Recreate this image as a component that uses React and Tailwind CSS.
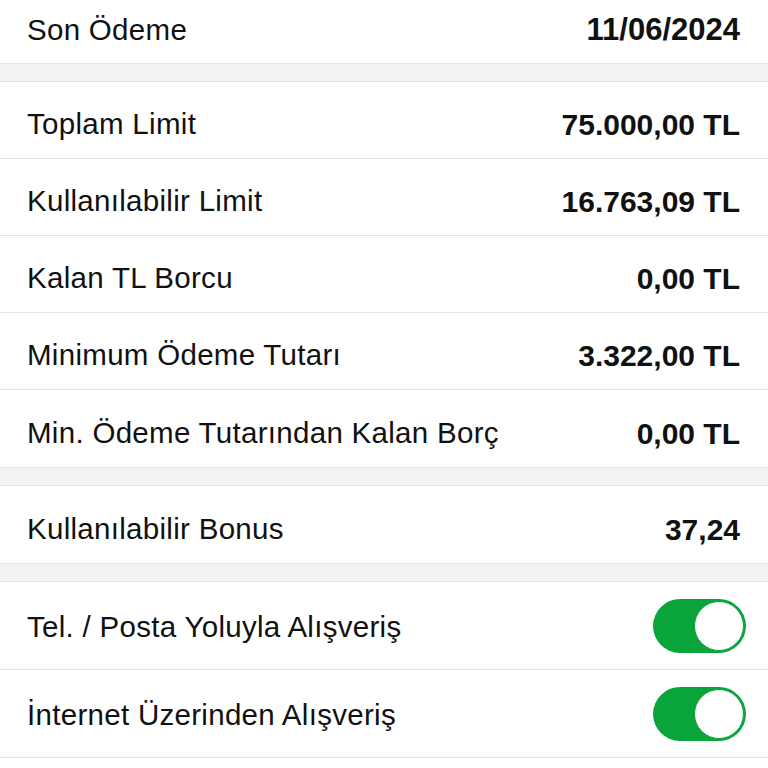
import React from "react";

const Row = ({ label, value, last }) => (
  <div className={`flex h-[77px] items-center justify-between pl-[27px] pr-[28px] pt-[9px] ${last ? "" : "border-b border-[#e3e3e3]"}`}>
    <span className="tracking-[0.01em]">{label}</span>
    <span className="text-[30px] font-bold">{value}</span>
  </div>
);

const Gap = () => <div className="h-[19px] border-y border-[#e3e3e3] bg-[#f3f3f3]" />;

const Toggle = () => (
  <div className="flex h-[54px] w-[93px] items-center justify-end rounded-full bg-[#0aa53a] p-[2px]">
    <div className="h-[50px] w-[50px] rounded-full border border-[#0aa53a] bg-white" />
  </div>
);

const ToggleRow = ({ label }) => (
  <div className="flex h-[88px] items-center justify-between border-b border-[#e3e3e3] pl-[27px] pr-[22px]">
    <span className="pt-[4px] tracking-[0.01em]">{label}</span>
    <Toggle />
  </div>
);

export default function App() {
  return (
    <div className="h-[768px] w-[768px] overflow-hidden bg-white text-[29.5px] text-[#111] [font-family:'Liberation_Sans',Arial,sans-serif]">
      <div className="flex h-[63px] items-center justify-between pb-[2px] pl-[27px] pr-[28px]">
        <span className="tracking-[0.01em]">Son Ödeme</span>
        <span className="text-[31px] font-bold">11/06/2024</span>
      </div>
      <Gap />
      <Row label="Toplam Limit" value="75.000,00 TL" />
      <Row label="Kullanılabilir Limit" value="16.763,09 TL" />
      <Row label="Kalan TL Borcu" value="0,00 TL" />
      <Row label="Minimum Ödeme Tutarı" value="3.322,00 TL" />
      <Row label="Min. Ödeme Tutarından Kalan Borç" value="0,00 TL" last />
      <Gap />
      <Row label="Kullanılabilir Bonus" value="37,24" last />
      <Gap />
      <ToggleRow label="Tel. / Posta Yoluyla Alışveriş" />
      <ToggleRow label="İnternet Üzerinden Alışveriş" />
    </div>
  );
}
